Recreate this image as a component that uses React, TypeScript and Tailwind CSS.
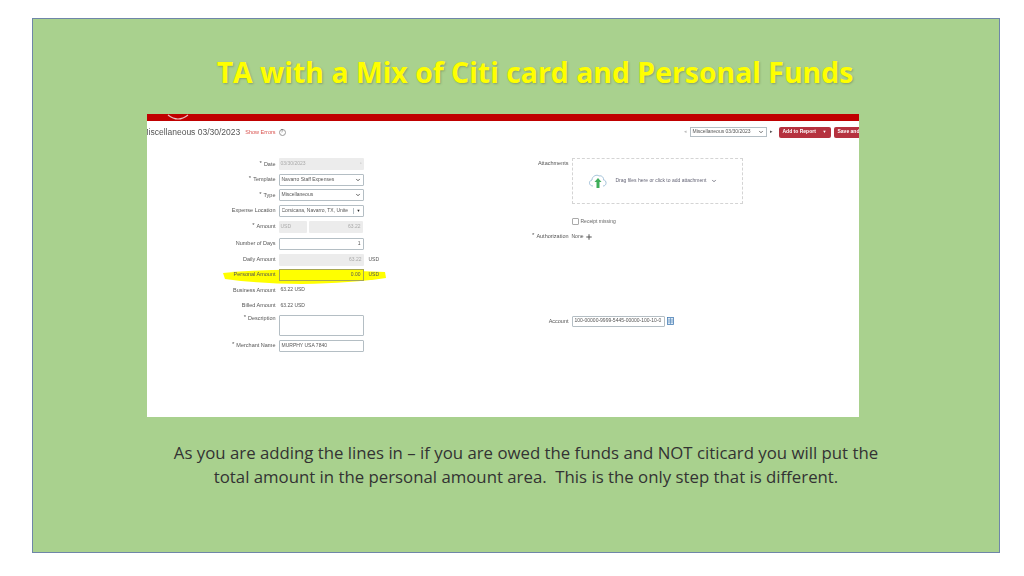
import { ChevronDown, Plus } from "lucide-react";

const font = "font-['Liberation_Sans',Arial,sans-serif]";

function Label({ text, star }: { text: string; star?: boolean }) {
  return (
    <div className="w-[132px] shrink-0 pr-[3px] text-right text-[5.500px] leading-[7px] text-[#555]">
      {star && <span className="relative top-[-1px] mr-[2px] text-[6px]">*</span>}
      {text}
    </div>
  );
}

function Field({ children, muted, w = "w-[85px]", h = "h-[12px]" }: { children?: React.ReactNode; muted?: boolean; w?: string; h?: string }) {
  return (
    <div
      className={`${w} ${h} flex items-center justify-between rounded-[1px] px-[2px] text-[5px] ${
        muted ? "bg-[#ececec] text-[#aaa]" : "border border-[#b4bec4] bg-white text-[#555]"
      }`}
    >
      {children}
    </div>
  );
}

function FormColumn() {
  return (
    <div className="relative flex w-[260px] shrink-0 flex-col">
      {/* marker highlight */}
      <svg className="absolute left-[75px] top-[111px]" width="165" height="20" viewBox="0 0 165 20">
        <path d="M1 6 Q40 2 90 3 T163 5 L164 11 Q130 16 80 17 Q40 17 3 12 Z" fill="#ffff00" />
      </svg>
      <div className="relative flex h-[16px] items-center">
        <Label text="Date" star />
        <Field muted>03/30/2023<span className="text-[#bbb]">▫</span></Field>
      </div>
      <div className="relative flex h-[15px] items-center">
        <Label text="Template" star />
        <Field>Navarro Staff Expenses<ChevronDown size={6} strokeWidth={3} className="text-[#333]" /></Field>
      </div>
      <div className="relative flex h-[16px] items-center">
        <Label text="Type" star />
        <Field>Miscellaneous<ChevronDown size={6} strokeWidth={3} className="text-[#333]" /></Field>
      </div>
      <div className="relative flex h-[15px] items-center">
        <Label text="Expense Location" />
        <Field>
          <span className="overflow-hidden whitespace-nowrap">Corsicana, Navarro, TX, Unite</span>
          <span className="ml-[1px] shrink-0 border-l border-[#b4bec4] pl-[3px] text-[4px] text-[#222]">▼</span>
        </Field>
      </div>
      <div className="relative flex h-[17px] items-center">
        <Label text="Amount" star />
        <div className="flex gap-[2px]">
          <Field muted w="w-[28px]">USD</Field>
          <Field muted w="w-[54px]"><span className="ml-auto">63.22</span></Field>
        </div>
      </div>
      <div className="relative flex h-[17px] items-center">
        <Label text="Number of Days" />
        <Field><span className="ml-auto">1</span></Field>
      </div>
      <div className="relative flex h-[15px] items-center">
        <Label text="Daily Amount" />
        <Field muted><span className="ml-auto">63.22</span></Field>
        <span className="ml-[5px] text-[5px] text-[#555]">USD</span>
      </div>
      <div className="relative flex h-[15px] items-center">
        <Label text="Personal Amount" />
        <div className="flex h-[12px] w-[85px] items-center justify-end border border-[#a8a850] bg-[#ffff00] px-[2px] text-[5px] text-[#555]">0.00</div>
        <span className="ml-[5px] text-[5px] text-[#555]">USD</span>
      </div>
      <div className="relative flex h-[16px] items-center">
        <Label text="Business Amount" />
        <span className="ml-[2px] text-[5px] text-[#555]">63.22 USD</span>
      </div>
      <div className="relative flex h-[15px] items-center">
        <Label text="Billed Amount" />
        <span className="ml-[2px] text-[5px] text-[#555]">63.22 USD</span>
      </div>
      <div className="relative mt-[2px] flex h-[22px] items-start">
        <Label text="Description" star />
        <Field h="h-[21px]" />
      </div>
      <div className="relative mt-[2px] flex h-[13px] items-center">
        <Label text="Merchant Name" star />
        <Field>MURPHY USA 7840</Field>
      </div>
    </div>
  );
}

function AttachColumn() {
  return (
    <div className="flex flex-1 flex-col pt-[2px]">
      <div className="flex items-start">
        <div className="mt-[2px] w-[162px] shrink-0 text-right text-[5.500px] leading-[7px] text-[#555]">Attachments</div>
        <div className="ml-[3px] flex h-[46px] w-[171px] items-center border border-dashed border-[#d4d4d4] pl-[15px]">
          <svg width="20" height="16" viewBox="0 0 20 16">
            <path d="M5 13 C1 13 0 8 4 7 C4 3 9 1 11 3 C14 2 16 5 15.500 7 C19 7 19 13 15 13" fill="none" stroke="#8fb4d0" strokeWidth="0.8" />
            <path d="M10 5 L13.500 9 L11.500 9 L11.500 15 L8.500 15 L8.500 9 L6.500 9 Z" fill="#3fae5a" />
          </svg>
          <span className="ml-[8px] whitespace-nowrap text-[5px] text-[#667]">Drag files here or click to add attachment</span>
          <ChevronDown size={6} strokeWidth={3} className="ml-[5px] text-[#556]" />
        </div>
      </div>
      <div className="ml-[165px] mt-[14px] flex items-center">
        <div className="h-[7px] w-[7px] rounded-[1px] border border-[#aaa] bg-white" />
        <span className="ml-[2px] text-[5px] text-[#666]">Receipt missing</span>
      </div>
      <div className="mt-[6px] flex h-[10px] items-center">
        <div className="w-[162px] shrink-0 text-right text-[5.500px] text-[#555]">
          <span className="relative top-[-1px] mr-[2px] text-[6px]">*</span>Authorization
        </div>
        <span className="ml-[3px] text-[5px] text-[#555]">None</span>
        <Plus size={8} strokeWidth={3} className="ml-[2px] text-[#555]" />
      </div>
      <div className="mt-[73px] flex h-[13px] items-center">
        <div className="w-[162px] shrink-0 text-right text-[5.500px] text-[#555]">Account</div>
        <div className="ml-[3px] flex h-[11px] w-[93px] items-center overflow-hidden whitespace-nowrap rounded-[1px] border border-[#b4bec4] bg-white px-[2px] text-[5px] text-[#555]">
          100-00000-9999-5445-00000-100-10-0
        </div>
        <svg className="ml-[2px]" width="7" height="8" viewBox="0 0 7 8">
          <rect x="0.500" y="0.500" width="6" height="7" fill="#dbe8f5" stroke="#4a7fb5" strokeWidth="0.800" />
          <path d="M1 3H6M1 5H6M3.500 1V7" stroke="#4a7fb5" strokeWidth="0.600" />
        </svg>
      </div>
    </div>
  );
}

export default function App() {
  return (
    <div className={`${font} h-[576px] w-[1024px] overflow-hidden bg-white pl-[32px] pt-[18px]`}>
      <div className="flex h-[535px] w-[968px] flex-col items-center border-[1.5px] border-[#6f86a8] bg-[#a9d18e]">
        <h1 className="mt-[34px] ml-[38px] whitespace-nowrap font-['Open_Sans',sans-serif] text-[28.400px] font-bold leading-[38px] text-[#ffff00] [text-shadow:1px_1px_2px_rgba(90,110,60,0.45)]">
          TA with a Mix of Citi card and Personal Funds
        </h1>

        <div className="relative mt-[23px] ml-[113.500px] h-[303px] w-[712px] self-start overflow-hidden bg-white blur-[0.3px]">
          <div className="h-[7px] bg-[#c00000]" />
          <svg className="absolute left-[20px] top-0" width="22" height="7" viewBox="0 0 22 7">
            <path d="M1 1 Q11 9 21 1" fill="none" stroke="#e8c4c4" strokeWidth="1.200" />
          </svg>

          <div className="flex h-[22px] items-center">
            <span className="ml-[-5px] whitespace-nowrap text-[8.500px] text-[#555]">Miscellaneous 03/30/2023</span>
            <span className="ml-[5px] text-[5.500px] text-[#d9534f]">Show Errors</span>
            <span className="ml-[3px] flex h-[7px] w-[7px] items-center justify-center rounded-full border border-[#999] text-[4.500px] text-[#666]">?</span>
            <span className="ml-auto text-[5px] text-[#bbb]">◂</span>
            <div className="ml-[3px] flex h-[10px] w-[77px] items-center justify-between border border-[#b4bec4] px-[2px] text-[5px] text-[#555]">
              Miscellaneous 03/30/2023
              <ChevronDown size={6} strokeWidth={3} className="text-[#444]" />
            </div>
            <span className="ml-[3px] text-[5px] text-[#555]">▸</span>
            <div className="ml-[6px] flex h-[11px] w-[52px] shrink-0 items-center justify-between rounded-[2px] bg-[#b5323f] px-[4px] text-[5px] font-bold text-white">
              Add to Report<span className="text-[4px]">▼</span>
            </div>
            <div className="ml-[3px] mr-[-12px] flex h-[11px] w-[37px] shrink-0 items-center overflow-hidden whitespace-nowrap rounded-[2px] bg-[#b5323f] px-[4px] text-[5px] font-bold text-white">
              Save and
            </div>
          </div>

          <div className="mt-[13px] flex">
            <FormColumn />
            <AttachColumn />
          </div>
        </div>

        <p className="mt-[24px] ml-[20px] w-[780px] text-center font-['Open_Sans',sans-serif] text-[16.800px] leading-[24px] text-[#333]">
          As you are adding the lines in – if you are owed the funds and NOT citicard you will put the
          <br />
          total amount in the personal amount area.&nbsp; This is the only step that is different.
        </p>
      </div>
    </div>
  );
}
